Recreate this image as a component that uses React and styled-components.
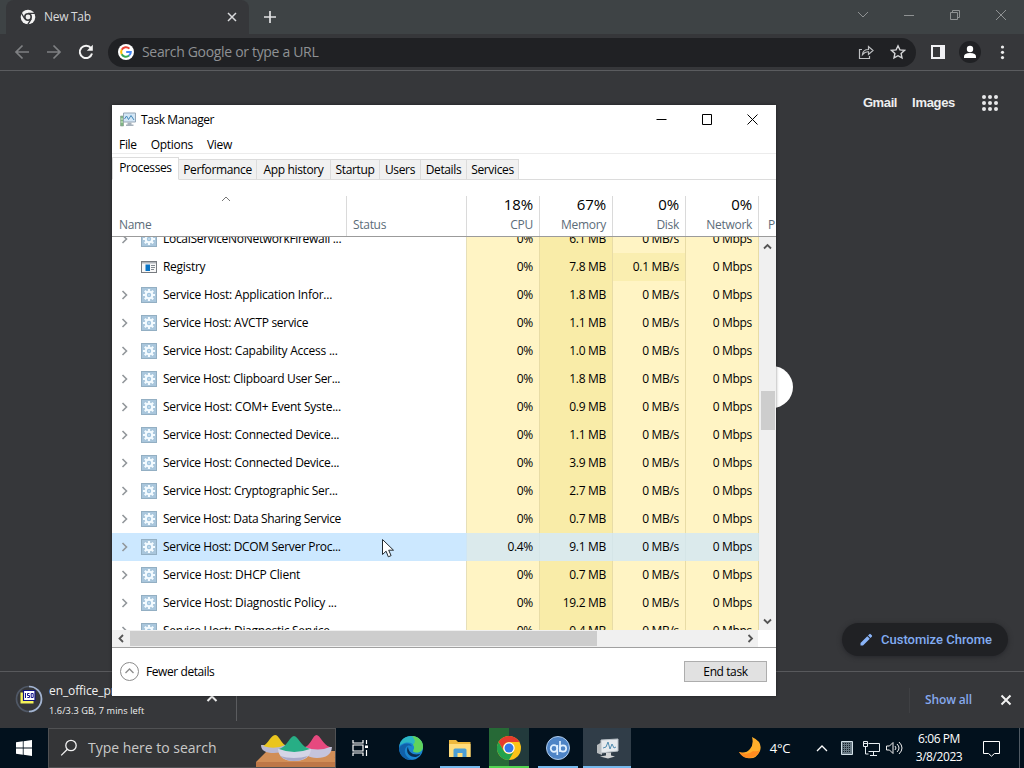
import React from 'react';
import styled, { createGlobalStyle } from 'styled-components';

const Global = createGlobalStyle`
  *{box-sizing:border-box}
  body{margin:0;background:#36373a;overflow:hidden;font-family:"Open Sans","Noto Sans",sans-serif;}
  svg{display:block;flex:none}
`;
const Desktop = styled.div`position:relative;width:1024px;height:768px;display:flex;flex-direction:column;background:#36373a;overflow:hidden;`;
const Label = styled.span`
  white-space:pre;font-size:${p => p.$s || 12}px;letter-spacing:${p => p.$ls ?? -0.3}px;
  color:${p => p.$c || 'inherit'};font-weight:${p => p.$w || 400};line-height:${p => p.$lh || 16}px;
  ${p => p.$f ? `font-family:${p.$f},sans-serif;` : ''}
`;

/* browser */
const TabStrip = styled.div`height:34px;flex:none;display:flex;background:#3e4345;padding-left:6px;`;
const BrowserTab = styled.div`width:243px;border-radius:8px 8px 0 0;background:#36373a;display:flex;align-items:center;padding:0 11px 0 14px;color:#d9dadc;`;
const TabTitle = styled.div`flex:1;margin-left:8px;display:flex;`;
const NewTab = styled.div`width:42px;display:flex;align-items:center;justify-content:center;`;
const WindowButtons = styled.div`margin-left:auto;display:flex;align-items:center;height:29px;gap:34px;padding-right:17px;`;
const Toolbar = styled.div`height:37px;flex:none;display:flex;align-items:center;border-bottom:1px solid #5b5c5f;padding-left:14px;`;
const NavButtons = styled.div`display:flex;gap:16px;margin-right:14px;`;
const Omnibox = styled.div`width:808px;height:29px;border-radius:15px;background:#202124;display:flex;align-items:center;padding:0 10px;`;
const OmniText = styled.div`flex:1;padding-left:8px;display:flex;`;
const OmniActions = styled.div`display:flex;gap:16px;`;
const ToolActions = styled.div`display:flex;align-items:center;margin-left:14px;gap:13px;`;
const Page = styled.div`flex:1;display:flex;flex-direction:column;`;
const PageLinks = styled.div`height:63px;display:flex;align-items:center;justify-content:flex-end;padding-right:25px;gap:15px;`;
const Apps = styled.div`margin-left:11px;display:flex;`;
const Customize = styled.div`margin:auto 16px 15px auto;width:166px;height:33px;border-radius:17px;background:#202124;box-shadow:0 1px 5px #25262a;display:flex;align-items:center;padding-left:16px;gap:7px;`;
const Shelf = styled.div`height:57px;flex:none;border-top:1px solid #58595c;display:flex;align-items:center;padding-left:15px;`;
const Download = styled.div`width:222px;height:43px;margin-top:-1px;border-right:1px solid #5b5c5f;display:flex;align-items:flex-start;padding-top:5px;`;
const DiscBadge = styled.div`padding-top:2px;`;
const DownloadText = styled.div`width:157px;margin-left:6px;display:flex;flex-direction:column;gap:4px;`;
const ShelfEnd = styled.div`margin-left:auto;display:flex;align-items:center;border-left:1px solid #3f4043;height:25px;padding:0 12px 0 15px;gap:28px;`;
const SearchKnob = styled.div`position:absolute;left:749px;top:366px;width:44px;height:42px;border-radius:21px;background:#fff;`;

/* task manager */
const Manager = styled.div`position:absolute;left:112px;top:105px;width:664px;height:591px;background:#fff;display:flex;flex-direction:column;color:#000;box-shadow:0 0 3px rgba(0,0,0,.45);overflow:hidden;`;
const TitleBar = styled.div`height:29px;flex:none;display:flex;align-items:center;padding:0 18px 0 8px;`;
const TitleText = styled.div`flex:1;margin-left:5px;display:flex;`;
const Controls = styled.div`display:flex;gap:35px;align-items:center;`;
const Menu = styled.div`height:20px;flex:none;border-bottom:1px solid #ececec;display:flex;align-items:center;padding:2px 0 0 7px;gap:14px;`;
const Tabs = styled.div`height:26px;flex:none;display:flex;align-items:flex-end;padding-top:3px;`;
const Tab = styled.div`
  width:${p => p.$w}px;height:${p => p.$on ? 23 : 21}px;display:flex;justify-content:center;align-items:center;
  background:${p => p.$on ? '#fff' : '#f1f1f1'};border:1px solid #dcdcdc;border-left-width:${p => p.$on ? 1 : 0}px;
  ${p => p.$on && 'border-bottom-color:#fff;padding-bottom:1px;'}
`;
const TabRest = styled.div`flex:1;border-bottom:1px solid #dcdcdc;`;
const Header = styled.div`height:57px;flex:none;border-bottom:1px solid #9b9b9b;display:flex;padding-top:16px;`;
const HeadCell = styled.div`
  width:${p => p.$w}px;flex:none;border-right:1px solid #dadada;display:flex;flex-direction:column;
  align-items:${p => p.$num ? 'flex-end' : 'flex-start'};justify-content:flex-end;padding:0 ${p => p.$num ? 6 : 0}px 3px ${p => p.$num ? 0 : (p.$pl || 6)}px;gap:4px;
`;
const SortMark = styled.div`align-self:center;margin-bottom:11px;padding-right:14px;`;
const Body = styled.div`height:393px;flex:none;display:flex;overflow:hidden;`;
const Rows = styled.div`width:647px;flex:none;margin-top:-12px;`;
const Row = styled.div`height:28px;display:flex;background:${p => p.$sel ? '#cce8ff' : '#fff'};`;
const NameCell = styled.div`width:355px;border-right:1px solid ${p => p.$sel ? '#cfe6f5' : '#e6dfba'};display:flex;align-items:center;padding-left:9px;`;
const Twisty = styled.div`width:20px;`;
const ProcName = styled.div`margin-left:6px;display:flex;`;
const Value = styled.div`
  width:73px;display:flex;align-items:center;justify-content:flex-end;padding-right:6px;
  border-right:1px solid ${p => p.$sel ? '#d5e5e7' : '#e8dca6'};
  background:${p => p.$sel ? '#dbeaec' : p.$heat === 2 ? '#f9eca8' : p.$heat === 1 ? '#faeeb0' : '#fff4c4'};
`;
const VScroll = styled.div`width:17px;background:#f0f0f0;display:flex;flex-direction:column;align-items:center;padding:6px 0 5px;`;
const VThumb = styled.div`width:14px;height:39px;background:#cdcdcd;margin:141px 0 auto;`;
const HScroll = styled.div`width:646px;height:17px;flex:none;display:flex;align-items:center;background:#f0f0f0;padding:0 4px 0 6px;`;
const HThumb = styled.div`width:467px;height:15px;background:#cdcdcd;margin:0 auto 0 6px;`;
const Footer = styled.div`flex:1;border-top:1px solid #a0a0a0;display:flex;align-items:center;padding:0 9px 0 8px;justify-content:space-between;`;
const Fewer = styled.div`display:flex;align-items:center;gap:7px;margin-top:-1px;`;
const EndButton = styled.div`width:83px;height:21px;margin-top:-1px;background:#e1e1e1;border:1px solid #adadad;display:flex;align-items:center;justify-content:center;`;
const Pointer = styled.div`position:absolute;left:381px;top:538px;`;

/* taskbar */
const Taskbar = styled.div`height:40px;flex:none;display:flex;background:#02111d;color:#fff;`;
const Start = styled.div`width:48px;display:flex;align-items:center;justify-content:center;`;
const Search = styled.div`width:288px;background:#343537;border:1px solid #505153;display:flex;align-items:center;padding-left:11px;overflow:hidden;`;
const SearchText = styled.div`width:168px;flex:none;margin-left:10px;display:flex;`;
const Task = styled.div`
  width:${p => p.$w}px;margin-left:${p => p.$ml || 0}px;display:flex;align-items:center;justify-content:center;
  background:${p => p.$bg || 'transparent'};box-shadow:${p => p.$bar ? `inset 0 -2px ${p.$bar}` : 'none'};
`;
const Tray = styled.div`margin-left:auto;display:flex;align-items:center;`;
const TrayItem = styled.div`width:${p => p.$w}px;display:flex;justify-content:center;`;
const Clock = styled.div`width:64px;display:flex;flex-direction:column;align-items:center;gap:2px;`;
const DeskEdge = styled.div`width:5px;height:40px;margin-left:8px;border-left:1px solid #505a63;`;

const Line = ({ w, h, d, c = '#111', s = 1 }) => (
  <svg width={w} height={h} viewBox={`0 0 ${w} ${h}`} fill="none" stroke={c} strokeWidth={s}><path d={d} /></svg>
);

const RegistryIcon = () => (
  <svg width="16" height="12" viewBox="0 0 16 12"><rect x=".5" y=".5" width="15" height="11" fill="#f7f7f7" stroke="#777b80" /><path d="M1 1h14v1.5H1z" fill="#aeb3b8" /><path d="M4.5 3.5H9V10H4.5z" fill="#0873c4" /><path d="M10 4.5h4M10 6.5h4M10 8.5h3" stroke="#81898f" /></svg>
);
const Gear = () => (
  <svg width="16" height="16" viewBox="0 0 16 16">
    <rect x=".5" y=".5" width="15" height="15" fill="#a9c6dc" stroke="#93afc3" />
    <g stroke="#f4fbff" strokeWidth="2.2"><path d="M8 2v12M2 8h12M3.800 3.800l8.400 8.400M12.200 3.800l-8.400 8.400" /></g>
    <circle cx="8" cy="8" r="4.300" fill="#f4fbff" />
    <circle cx="8" cy="8" r="2.200" fill="#9fc3de" />
    <circle cx="8" cy="8" r="1" fill="#c9deed" />
  </svg>
);
const ChromeMono = () => (
  <svg width="16" height="16" viewBox="0 0 16 16"><circle cx="8" cy="8" r="7.3" fill="#f3f3f3" /><circle cx="8" cy="8" r="3.2" fill="#eee" stroke="#36373a" strokeWidth="1.6" /><path d="M8 4.3h7M4.8 9.8 1.3 4M11.2 9.8 7.7 15.6" stroke="#36373a" strokeWidth="1.3" /></svg>
);
const ChromeColor = () => (
  <svg width="24" height="24" viewBox="0 0 24 24"><circle cx="12" cy="12" r="12" fill="#fbc318" /><path d="M1.6 6A12 12 0 0 1 22.4 6H12A6 6 0 0 0 6.8 15z" fill="#e53b2d" /><path d="M1.6 6A12 12 0 0 0 12 24l5.2-9A6 6 0 0 1 6.8 15z" fill="#23a24d" /><circle cx="12" cy="12" r="5.7" fill="#fff" /><circle cx="12" cy="12" r="4.5" fill="#3377e8" /></svg>
);
const GoogleG = () => (
  <svg width="16" height="16" viewBox="0 0 16 16"><circle cx="8" cy="8" r="8" fill="#fff" /><g fill="none" strokeWidth="2"><path d="M11.4 4.6A4.8 4.8 0 0 0 3.7 5.8" stroke="#e94235" /><path d="M3.7 5.8a4.8 4.8 0 0 0 0 4.4" stroke="#fbbc04" /><path d="M3.7 10.2a4.8 4.8 0 0 0 7.4 1.4" stroke="#34a853" /><path d="M11.1 11.6A4.8 4.8 0 0 0 12.8 8H8.2" stroke="#4285f4" /></g></svg>
);
const ManagerIcon = () => (
  <svg width="16" height="15" viewBox="0 0 16 15"><path d="M.5 4h3v10h-3z" fill="#7fb584" stroke="#84988d" strokeWidth=".6" /><path d="M.7 7h2.4M.7 10h2.4" stroke="#d7f0cf" /><path d="M3.500 1h12v9h-12z" fill="#d3e6f5" stroke="#94a5b5" /><path d="m4.5 7 2-3 2 3.500 2.500-4L14 8" stroke="#4389ba" fill="none" /><path d="M7.500 10.500h4v2h2v1.500H6v-1.500h1.500z" fill="#a7b2bc" /></svg>
);
const Powders = () => (
  <svg width="80" height="39" viewBox="0 0 80 39">
    <path d="M11 22h62l7 8v9H0v-6z" fill="#d18e57" /><path d="M0 33h80v6H0z" fill="#bd7747" /><path d="M70 22h10v8z" fill="#d18e57" />
    <path d="M5 16q0 8 13 8 12 0 13-8z" fill="#b9b8d2" /><path d="M7 17c5-2 8-11 12-11s6 8 10 10q-10 5-22 1" fill="#eac51e" />
    <path d="M47 18q1 11 14 11 14 0 15-11z" fill="#c5c4dc" /><path d="M49 18C55 16 57 6 60.500 6S67 16 74 18q-12 5-25 0" fill="#e6497f" />
    <path d="M22 20q1 12 16 12 16 0 17-12z" fill="#d4d5e6" /><path d="M24 27q6 5 14 5 9 0 14-5-6 2-14 2t-14-2" fill="#a9a9c9" /><path d="M23 20C31 18 34 7 38 7s7 11 16 13q-16 6-31 0" fill="#27ae85" />
  </svg>
);

const rows = [
  ['LocalServiceNoNetworkFirewall ...', '0%', '6.1 MB', '0 MB/s', -0.3],
  ['Registry', '0%', '7.8 MB', '0.1 MB/s', -0.3],
  ['Service Host: Application Infor...', '0%', '1.8 MB', '0 MB/s', -0.24],
  ['Service Host: AVCTP service', '0%', '1.1 MB', '0 MB/s', -0.3],
  ['Service Host: Capability Access ...', '0%', '1.0 MB', '0 MB/s', -0.24],
  ['Service Host: Clipboard User Ser...', '0%', '1.8 MB', '0 MB/s', -0.36],
  ['Service Host: COM+ Event Syste...', '0%', '0.9 MB', '0 MB/s', -0.24],
  ['Service Host: Connected Device...', '0%', '1.1 MB', '0 MB/s', -0.27],
  ['Service Host: Connected Device...', '0%', '3.9 MB', '0 MB/s', -0.27],
  ['Service Host: Cryptographic Ser...', '0%', '2.7 MB', '0 MB/s', -0.3],
  ['Service Host: Data Sharing Service', '0%', '0.7 MB', '0 MB/s', -0.35],
  ['Service Host: DCOM Server Proc...', '0.4%', '9.1 MB', '0 MB/s', -0.32],
  ['Service Host: DHCP Client', '0%', '0.7 MB', '0 MB/s', -0.22],
  ['Service Host: Diagnostic Policy ...', '0%', '19.2 MB', '0 MB/s', -0.22],
  ['Service Host: Diagnostic Service...', '0%', '0.4 MB', '0 MB/s', -0.3],
];
const tabs = [['Processes', 67], ['Performance', 78], ['App history', 74], ['Startup', 49], ['Users', 41], ['Details', 46], ['Services', 52]];
const heads = [['18%', 'CPU'], ['67%', 'Memory'], ['0%', 'Disk'], ['0%', 'Network']];

function Browser() {
  return (
    <>
      <TabStrip>
        <BrowserTab>
          <ChromeMono />
          <TabTitle><Label $ls={-0.3}>New Tab</Label></TabTitle>
          <Line w={12} h={12} d="m2 2 8 8M10 2l-8 8" c="#dadbdd" s={1.5} />
        </BrowserTab>
        <NewTab><Line w={12} h={12} d="M6 0v12M0 6h12" c="#e1e2e3" s={1.7} /></NewTab>
        <WindowButtons>
          <Line w={12} h={12} d="m1 3 5 5 5-5" c="#8f9293" />
          <Line w={12} h={12} d="M1 6.5h10" c="#8f9293" />
          <Line w={12} h={12} d="M1.5 3.5h7v7h-7zM3.5 3V1.5h7v7H9" c="#8f9293" />
          <Line w={12} h={12} d="m1 1 10 10M11 1 1 11" c="#8f9293" />
        </WindowButtons>
      </TabStrip>
      <Toolbar>
        <NavButtons>
          <Line w={16} h={16} d="M15 8H2m6.5-6.5L2 8l6.5 6.5" c="#7f8083" s={1.7} />
          <Line w={16} h={16} d="M1 8h13M7.5 1.5 14 8l-6.5 6.5" c="#7f8083" s={1.7} />
          <svg width="16" height="16" viewBox="0 0 16 16"><path d="M13 4.2A6.2 6.2 0 1 0 14 9.500" fill="none" stroke="#f4f4f4" strokeWidth="2" /><path d="M14.800.8v6H8.800z" fill="#f4f4f4" /></svg>
        </NavButtons>
        <Omnibox>
          <GoogleG />
          <OmniText><Label $s={14} $ls={-0.32} $c="#8f9194" $lh={18}>Search Google or type a URL</Label></OmniText>
          <OmniActions>
            <Line w={16} h={16} d="M4 5.5H1.5v9h10V12M4.500 10.500Q5 5.500 10.500 5.500V2.500l4.500 4-4.500 4V7.800Q7 7.500 4.500 10.500z" c="#bfc1c3" s={1.2} />
            <Line w={16} h={16} d="m8 1.800 1.900 4.100 4.500.5-3.300 3 .9 4.500L8 11.700l-4 2.200.9-4.500-3.300-3 4.500-.5z" c="#d5d6d8" s={1.4} />
          </OmniActions>
        </Omnibox>
        <ToolActions>
          <svg width="16" height="16" viewBox="0 0 16 16"><path d="M1 1h14v14H1z" fill="#f1f1f4" /><path d="M3 3h7v10H3z" fill="#36373a" /></svg>
          <svg width="22" height="22" viewBox="0 0 22 22"><circle cx="11" cy="11" r="11" fill="#202124" /><circle cx="11" cy="8" r="3.2" fill="#fff" /><path d="M5 17v-1.500q0-3.500 6-3.500t6 3.500V17z" fill="#fff" /></svg>
          <svg width="16" height="16" viewBox="0 0 16 16" fill="#eee"><circle cx="8.500" cy="3" r="1.600" /><circle cx="8.500" cy="8.300" r="1.600" /><circle cx="8.500" cy="13.600" r="1.600" /></svg>
        </ToolActions>
      </Toolbar>
      <Page>
        <PageLinks>
          <Label $f='"Liberation Sans"' $s={13} $ls={-0.38} $w={700} $c="#eeeeef">Gmail</Label>
          <Label $f='"Liberation Sans"' $s={13} $ls={-0.32} $w={700} $c="#eeeeef">Images</Label>
          <Apps><svg width="18" height="18" viewBox="0 0 18 18" fill="#e8e8e9">{[3, 9, 15].flatMap(y => [3, 9, 15].map(x => <circle key={`${x}-${y}`} cx={x} cy={y} r="2" />))}</svg></Apps>
        </PageLinks>
        <Customize>
          <svg width="16" height="16" viewBox="0 0 16 16" fill="#8ab4f8"><path d="m2.500 11 6.800-6.800 2.500 2.500L5 13.500H2.500zM10 3.500l1.300-1.300q.7-.7 1.400 0l1.100 1.100q.7.7 0 1.400L12.500 6z" /></svg>
          <Label $f="Roboto" $s={13} $ls={0} $w={500} $c="#82acf2">Customize Chrome</Label>
        </Customize>
      </Page>
      <Shelf>
        <Download>
          <DiscBadge>
            <svg width="28" height="28" viewBox="0 0 28 28"><circle cx="14" cy="14" r="12.5" fill="none" stroke="#505866" strokeWidth="1.7" /><path d="M14 1.500a12.500 12.500 0 0 1 0 25" fill="none" stroke="#a3b4d1" strokeWidth="1.7" /><path d="M5.500 7.500h13v11h-13z" fill="#f4f25a" /><path d="M8.500 5.500h11.500v10H8.500z" fill="#fff" stroke="#12137e" strokeWidth="1.2" /><path d="M10.500 8v5M14.500 8.500h-2v2h2v2h-2.200M16.200 8.500h2v4h-2z" stroke="#15158e" fill="none" /></svg>
          </DiscBadge>
          <DownloadText>
            <Label $ls={-0.1} $c="#f0f0f0">en_office_pro</Label>
            <Label $s={9.2} $ls={0.07} $c="#f0f0f0">1.6/3.3 GB, 7 mins left</Label>
          </DownloadText>
          <Line w={12} h={28} d="m1.500 18 4.500-4.500 4.500 4.500" c="#eee" s={2} />
        </Download>
        <ShelfEnd><Label $s={12} $ls={-0.15} $w={600} $c="#86a9ed">Show all</Label><Line w={12} h={12} d="m1.500 1.500 9 9m0-9-9 9" c="#f2f2f2" s={2} /></ShelfEnd>
      </Shelf>
    </>
  );
}

function TaskManager() {
  return (
    <Manager>
      <TitleBar>
        <ManagerIcon />
        <TitleText><Label $ls={-0.42}>Task Manager</Label></TitleText>
        <Controls>
          <Line w={11} h={11} d="M.5 5.500h10" c="#000" />
          <Line w={10} h={11} d="M.5.500h9v10h-9z" c="#000" />
          <Line w={11} h={11} d="m.5.500 10 10m0-10-10 10" c="#000" />
        </Controls>
      </TitleBar>
      <Menu><Label>File</Label><Label>Options</Label><Label>View</Label></Menu>
      <Tabs>{tabs.map(([t, w], i) => <Tab key={t} $w={w} $on={i === 0}><Label $ls={-0.36}>{t}</Label></Tab>)}<TabRest /></Tabs>
      <Header>
        <HeadCell $w={235} $pl={7}>
          <SortMark><Line w={10} h={6} d="m1 5 4-4 4 4" c="#777" /></SortMark>
          <Label $c="#5c6c79">Name</Label>
        </HeadCell>
        <HeadCell $w={120}><Label $c="#5c6c79">Status</Label></HeadCell>
        {heads.map(([v, t]) => <HeadCell key={t} $w={73} $num><Label $s={15} $ls={-0.1} $lh={17}>{v}</Label><Label $c="#5c6c79">{t}</Label></HeadCell>)}
        <HeadCell $w={20} $pl={9}><Label $c="#5c6c79">P</Label></HeadCell>
      </Header>
      <Body>
        <Rows>
          {rows.map(([n, cpu, mem, disk, ls], i) => {
            const sel = i === 11;
            return (
              <Row key={i} $sel={sel}>
                <NameCell $sel={sel}>
                  <Twisty>{i !== 1 && <Line w={8} h={10} d="m1.500 1 4 4-4 4" c="#92979b" s={1.6} />}</Twisty>
                  {i === 1 ? <RegistryIcon /> : <Gear />}
                  <ProcName><Label $ls={ls}>{n}</Label></ProcName>
                </NameCell>
                <Value $sel={sel}><Label>{cpu}</Label></Value>
                <Value $sel={sel} $heat={2}><Label>{mem}</Label></Value>
                <Value $sel={sel} $heat={i === 1 ? 1 : 0}><Label>{disk}</Label></Value>
                <Value $sel={sel}><Label>0 Mbps</Label></Value>
              </Row>
            );
          })}
        </Rows>
        <VScroll>
          <Line w={9} h={7} d="m1 5.500 3.500-3.500L8 5.500" c="#555" s={1.8} />
          <VThumb />
          <Line w={9} h={7} d="m1 1.500 3.500 3.500L8 1.500" c="#555" s={1.8} />
        </VScroll>
      </Body>
      <HScroll>
        <Line w={6} h={9} d="M5 1 1.500 4.500 5 8" c="#555" s={1.8} />
        <HThumb />
        <Line w={7} h={9} d="M1.500 1 5 4.500 1.500 8" c="#555" s={1.8} />
      </HScroll>
      <Footer>
        <Fewer>
          <svg width="19" height="19" viewBox="0 0 19 19" fill="none" stroke="#8c8c8c"><circle cx="9.500" cy="9.500" r="9" /><path d="m5.500 11 4-4 4 4" strokeWidth="1.3" /></svg>
          <Label $ls={-0.42}>Fewer details</Label>
        </Fewer>
        <EndButton><Label $ls={-0.4}>End task</Label></EndButton>
      </Footer>
    </Manager>
  );
}

function Bar() {
  return (
    <Taskbar>
      <Start><svg width="16" height="16" viewBox="0 0 16 16" fill="#fff"><path d="m0 2.300 6.800-1v6.300H0zM7.600 1.200 16 0v7.600H7.600zM0 8.400h6.800v6.300l-6.800-1zM7.600 8.400H16V16l-8.400-1.200z" /></svg></Start>
      <Search>
        <svg width="18" height="18" viewBox="0 0 18 18" fill="none" stroke="#f1f1f1" strokeWidth="1.3"><circle cx="11" cy="6.500" r="5.200" /><path d="m7.400 10.200-6.200 6.200" /></svg>
        <SearchText><Label $s={14} $ls={-0.02} $c="#c9c9c8" $lh={20}>Type here to search</Label></SearchText>
        <Powders />
      </Search>
      <Task $w={48}><svg width="17" height="16" viewBox="0 0 17 16" fill="none" stroke="#fff" strokeWidth="1.2"><path d="M1 0v3h10V0M1 16v-3h10v3M1 5h10v6H1zM14.500 0v4M14.500 10v6" /><path d="M13 5.500h3v2.500h-3z" fill="#fff" stroke="none" /></svg></Task>
      <Task $w={54}>
        <svg width="24" height="24" viewBox="0 0 24 24">
          <circle cx="12" cy="12" r="12" fill="#1a85d0" />
          <path d="M.3 10C1.500 3.500 6.500 0 12 0c7 0 12 5 12 10.500 0 4-3 6-6.500 6-3 0-4-1-3-2.500 2-4-1-7.500-5.500-7.500-4 0-7.500 2-8.700 3.500" fill="#2bb7c4" />
          <path d="M13 0c7 .5 11 5 11 10.500 0 4-3 6-6.500 6-3 0-4-1-3-2.500q1.500-3-.5-5.300Q18 5 13 0" fill="#5fd35c" />
          <path d="M9 10.500C6 17 11 21.500 17 21q3-1 4.500-3.300c-6 2.300-12.500-.7-12.500-7.200" fill="#0a2c50" />
          <path d="M9 9.500C3 13 6 23 14 23.800 6 25 0 19 0 12q3-4.500 8-4.500 4 0 5 3-2-1.500-4-1" fill="#1160a9" />
        </svg>
      </Task>
      <Task $w={40} $ml={2} $bar="#76b9ed"><svg width="22" height="19" viewBox="0 0 22 19"><path d="M0 1h7l2 2h12.500v15H0z" fill="#eeb83d" /><path d="M0 5h21.500v13H0z" fill="#ffdc7c" /><path d="M4.500 18v-7q0-1.500 1.500-1.500h10q1.500 0 1.500 1.500v7h-4v-4h-5v4z" fill="#4b9ed6" /></svg></Task>
      <Task $w={40} $ml={9} $bg="linear-gradient(90deg,#266936 50%,#223a3c 50%)" $bar="#52d552"><ChromeColor /></Task>
      <Task $w={40} $ml={9} $bar="#76b9ed"><svg width="24" height="24" viewBox="0 0 24 24"><circle cx="12" cy="12" r="11.500" fill="#4e84c6" stroke="#b1cdec" /><g fill="none" stroke="#dfefff" strokeWidth="1.700"><circle cx="8" cy="12.500" r="3.300" /><path d="M11.300 9v10M14 5v11" /><circle cx="17" cy="12.500" r="3.200" /></g></svg></Task>
      <Task $w={48} $ml={5} $bg="#303d48" $bar="#76b9ed"><svg width="23" height="21" viewBox="0 0 23 21"><path d="m1 7 5-3v13l-5-2z" fill="#b8bcbe" /><path d="m5 2 17-1v12L5 15z" fill="#e6eaed" stroke="#b8c0c6" /><path d="m7 10 3-1 2-5 2 7 2-5 2 4 2-1" fill="none" stroke="#4f8cb0" /><path d="m10 15 5-.5v3l4 1-7 2-8-2 6-1z" fill="#d2d4d5" /></svg></Task>
      <Tray>
        <TrayItem $w={22}><svg width="22" height="22" viewBox="0 0 22 22"><path d="M13 0q11 5 8 14-4 9-13 7-5-1-8-6 7 2 11-3 4-5 2-12" fill="#ffaf2b" /><path d="M21 13q-4 9-13 8-5-1-8-6 9 4 14-1 4 1 7-1" fill="#ff8b20" /></svg></TrayItem>
        <TrayItem $w={38}><Label $s={13} $ls={-0.2}>4°C</Label></TrayItem>
        <TrayItem $w={46}><Line w={12} h={8} d="m1 7 5-5 5 5" c="#fff" s={1.3} /></TrayItem>
        <TrayItem $w={3}><svg width="12" height="14" viewBox="0 0 12 14"><path d="M.5.500h11v13H.5z" fill="#687984" stroke="#d3e1e8" /><path d="M2 2.500h8M2 4.500h8M2 6.500h8M2 8.500h8M2 10.500h8" stroke="#14202a" strokeDasharray="1 1" /></svg></TrayItem>
        <TrayItem $w={46}><svg width="17" height="15" viewBox="0 0 17 15" fill="none" stroke="#e8eef2"><path d="M5.500 2.500h11v8h-11M10.500 11v3M7 14.500h7M.5.500h4v5h-4zM1 2.500h3M2.500 6v7h3" /></svg></TrayItem>
        <TrayItem $w={1}><svg width="17" height="14" viewBox="0 0 17 14" fill="none" stroke="#eee"><path d="M.5 5h3L7 1.500v11L3.500 9h-3zM9 5q2 2 0 4M11 3q4 4 0 8M13 1q6 6 0 12" /></svg></TrayItem>
        <TrayItem $w={12} />
        <Clock><Label $ls={-0.42}>6:06 PM</Label><Label $ls={-0.42}>3/8/2023</Label></Clock>
        <TrayItem $w={40}><svg width="17" height="17" viewBox="0 0 17 17" fill="none" stroke="#fff"><path d="M.5 1.500h16v12h-5L8.500 16.200l-3-2.700h-5z" /></svg></TrayItem>
        <DeskEdge />
      </Tray>
    </Taskbar>
  );
}

export default function App() {
  return (
    <>
      <Global />
      <Desktop>
        <Browser />
        <Bar />
        <SearchKnob />
        <TaskManager />
        <Pointer><svg width="14" height="21" viewBox="0 0 14 21"><path d="M1.500 1.500v15l3.600-3.300 2.200 5.600 2.800-1.200-2.400-5.400h4.800z" fill="#fff" stroke="#222a30" /></svg></Pointer>
      </Desktop>
    </>
  );
}
